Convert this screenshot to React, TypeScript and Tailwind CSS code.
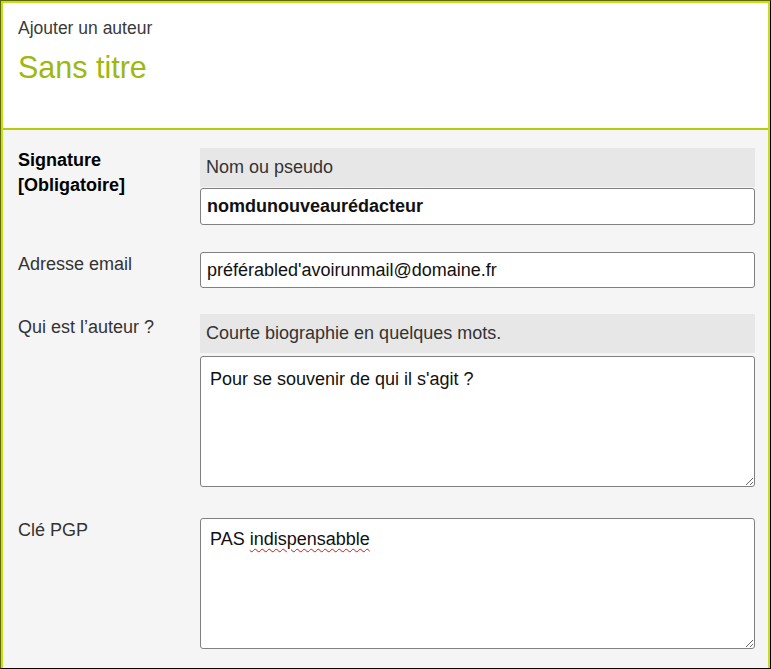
import { useState } from 'react'

const FONT = "font-['Liberation_Sans',Arial,sans-serif]"

function Label({ children, bold = false }: { children: React.ReactNode; bold?: boolean }) {
  return (
    <div
      className={`w-[182px] shrink-0 text-[18px] leading-[25px] ${
        bold ? 'font-bold text-black' : 'text-[#333]'
      }`}
    >
      {children}
    </div>
  )
}

function Hint({ children }: { children: React.ReactNode }) {
  return (
    <div className="flex h-[39px] items-center bg-[#e7e7e7] px-[6px] text-[18px] text-[#333]">
      {children}
    </div>
  )
}

export default function App() {
  const [name, setName] = useState('nomdunouveaurédacteur')
  const [email, setEmail] = useState("préférabled'avoirunmail@domaine.fr")
  const [bio, setBio] = useState("Pour se souvenir de qui il s'agit ?")

  return (
    <div className={`h-[669px] w-[771px] ${FONT}`}>
      <div className="flex h-full flex-col border border-[#5f6d08] border-r-black border-b-black">
        <div className="flex h-full flex-col border-2 border-b-0 border-[#c9dc24]">
          {/* header */}
          <div className="h-[125px] shrink-0 bg-white px-[15px] pt-[15px]">
            <div className="text-[17.5px] leading-[20px] text-[#3a3a3a]">Ajouter un auteur</div>
            <h1 className="mt-[11px] text-[30.5px] leading-[36px] text-[#9db80f]">Sans titre</h1>
          </div>
          <div className="h-[2px] shrink-0 bg-[#b6cc0a]" />

          {/* form */}
          <div className="flex flex-1 flex-col bg-[#f5f5f5] pl-[15px] pr-[13px] pt-[18px]">
            <div className="flex items-start">
              <Label bold>
                Signature
                <br />
                [Obligatoire]
              </Label>
              <div className="flex flex-1 flex-col gap-px">
                <Hint>Nom ou pseudo</Hint>
                <input
                  value={name}
                  onChange={(e) => setName(e.target.value)}
                  className="h-[37px] w-full rounded-[3px] border border-[#808080] bg-white px-[6px] text-[18px] font-bold text-[#111] outline-none"
                />
              </div>
            </div>

            <div className="mt-[27px] flex items-start">
              <Label>Adresse email</Label>
              <input
                value={email}
                onChange={(e) => setEmail(e.target.value)}
                className="h-[36px] flex-1 rounded-[3px] border border-[#808080] bg-white px-[6px] text-[18px] text-[#111] outline-none"
              />
            </div>

            <div className="mt-[26px] flex items-start">
              <div className="pt-px">
                <Label>Qui est l’auteur ?</Label>
              </div>
              <div className="flex flex-1 flex-col gap-[3px]">
                <Hint>Courte biographie en quelques mots.</Hint>
                <textarea
                  value={bio}
                  onChange={(e) => setBio(e.target.value)}
                  spellCheck={false}
                  className="h-[131px] w-full rounded-[3px] border border-[#808080] bg-white px-[9px] pt-[11px] pb-[9px] text-[18px] leading-[22px] text-[#111] outline-none"
                />
              </div>
            </div>

            <div className="mt-[31px] flex items-start">
              <Label>Clé PGP</Label>
              <div
                role="textbox"
                contentEditable
                suppressContentEditableWarning
                spellCheck={false}
                className="h-[131px] flex-1 resize overflow-auto rounded-[3px] border border-[#808080] bg-white px-[9px] py-[9px] text-[18px] leading-[22px] text-[#111] outline-none"
              >
                PAS{' '}
                <span className="underline decoration-[#d21414] decoration-wavy decoration-1 underline-offset-[3px]">
                  indispensabble
                </span>
              </div>
            </div>
          </div>
        </div>
      </div>
    </div>
  )
}
